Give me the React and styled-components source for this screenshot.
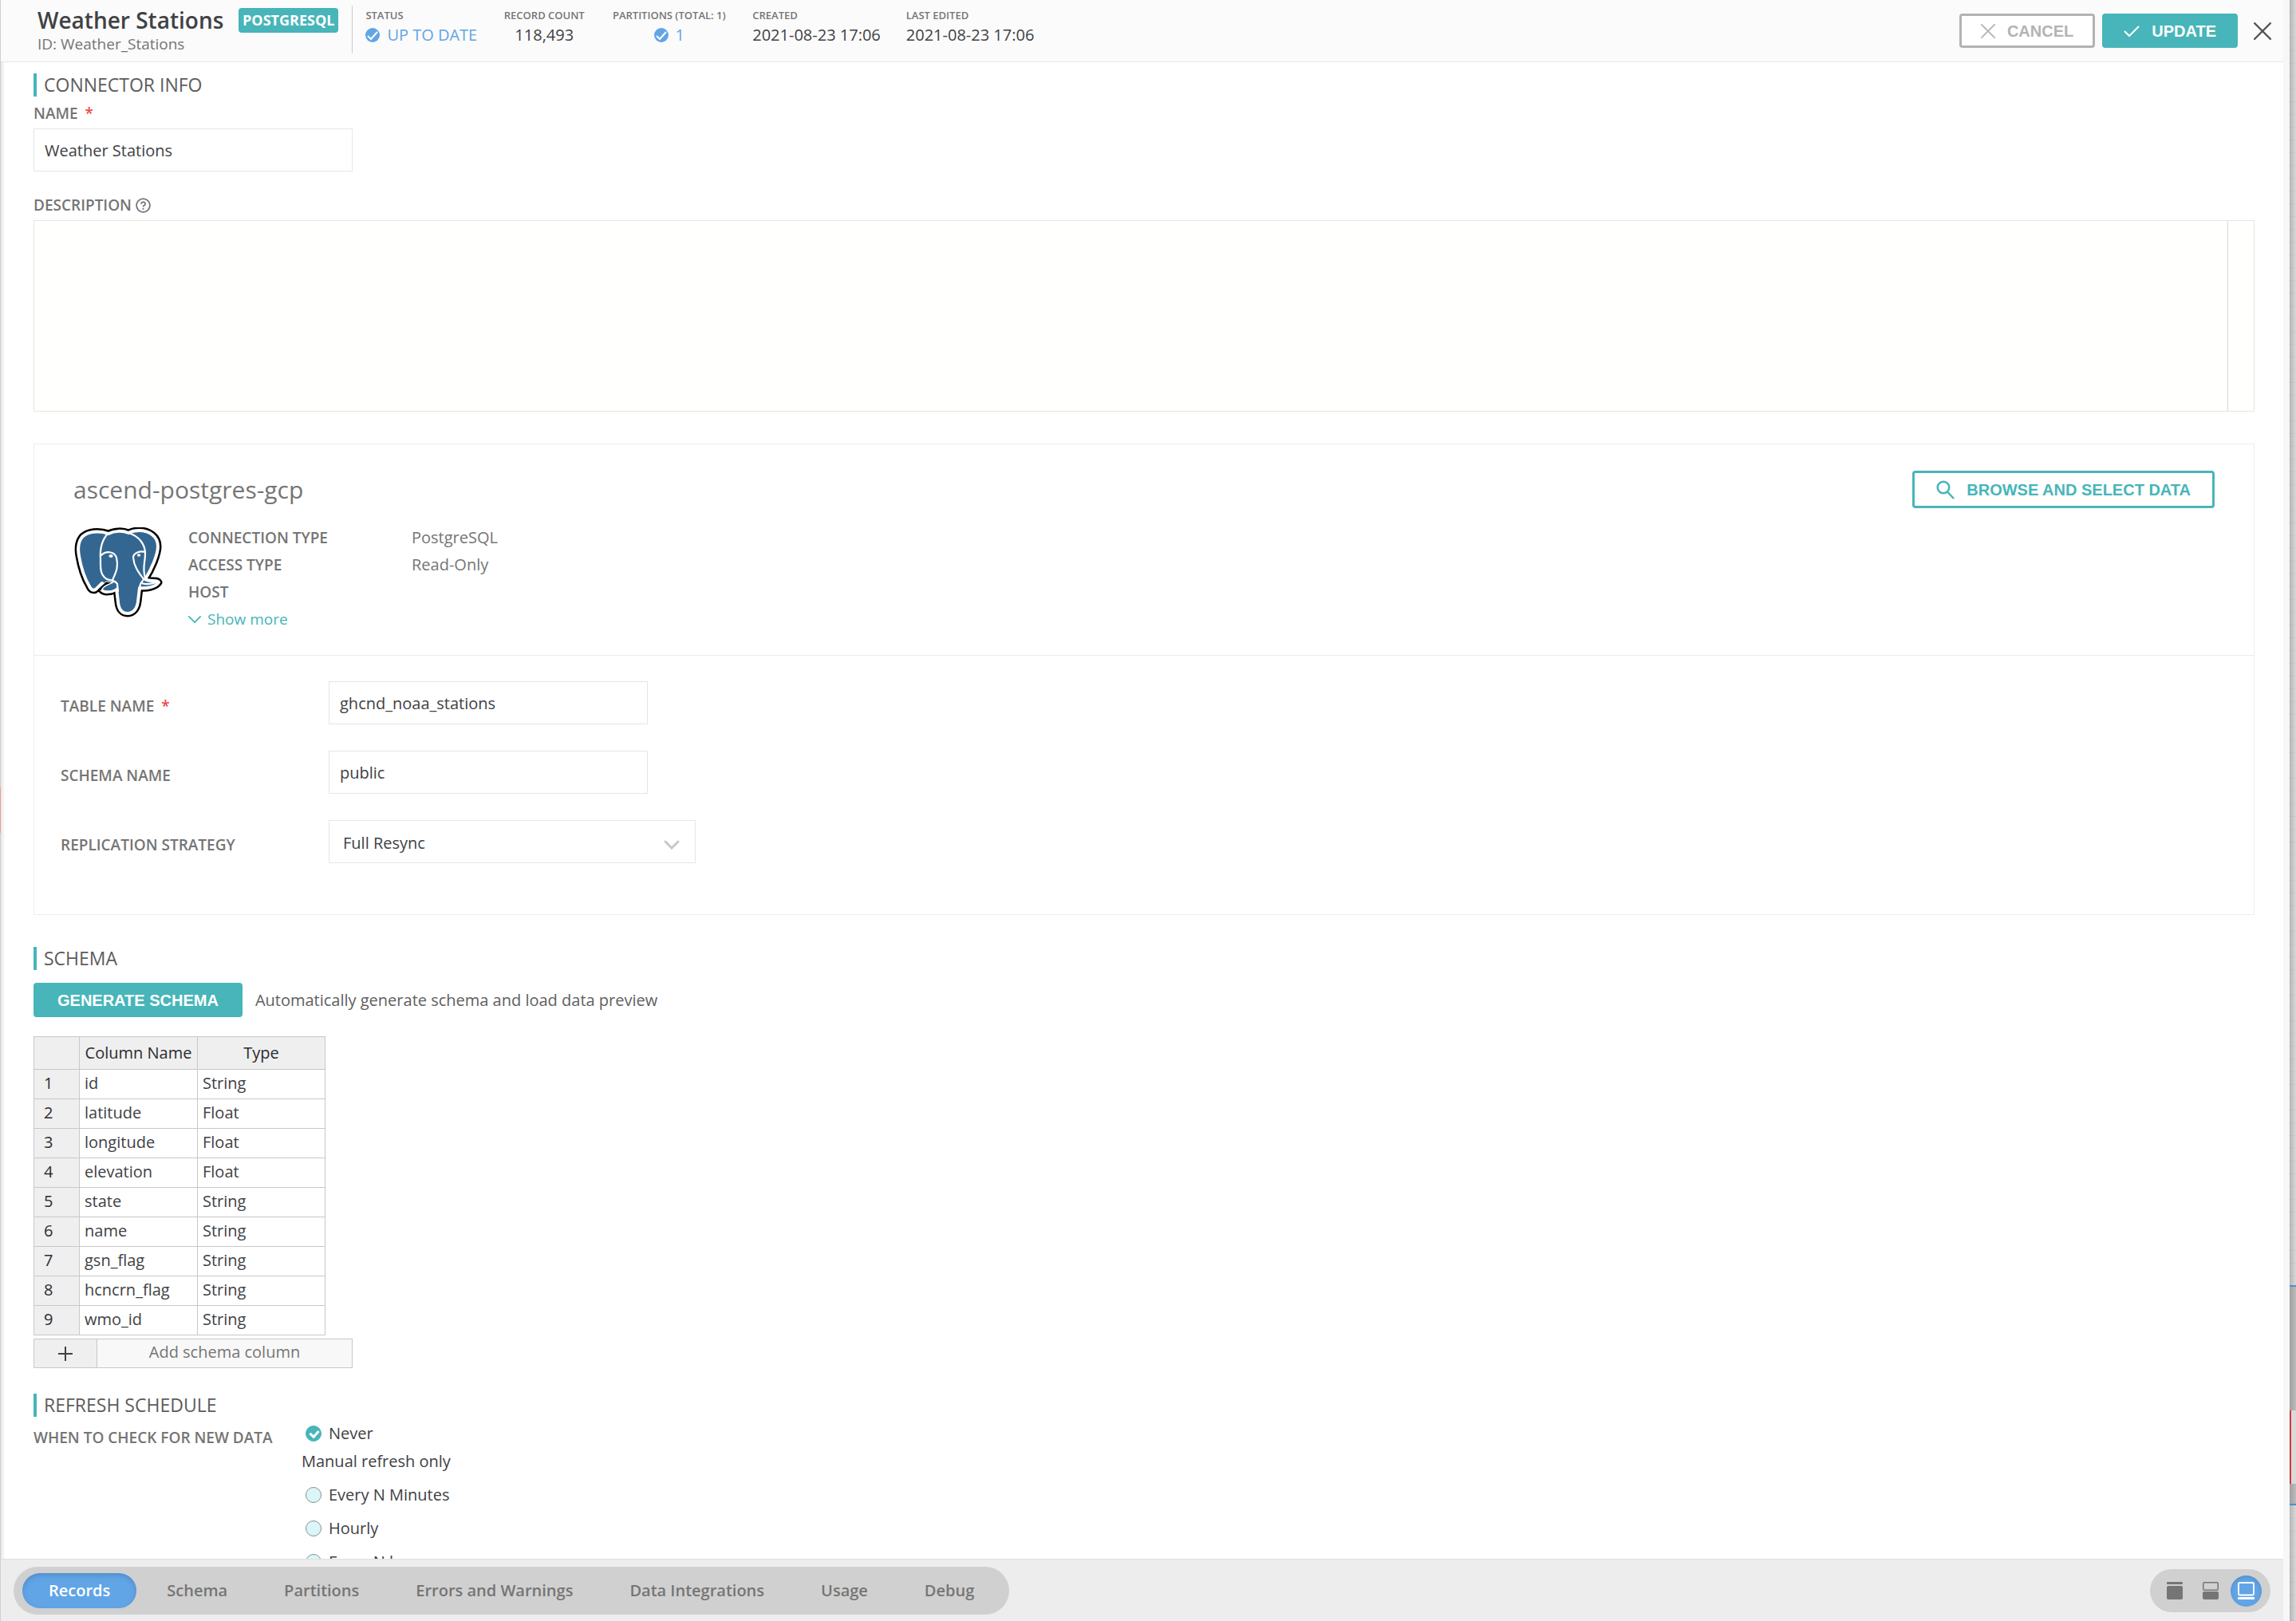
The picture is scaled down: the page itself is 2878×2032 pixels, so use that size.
import React from 'react';
import styled, { createGlobalStyle, css } from 'styled-components';

const teal = '#47b5b9';
const blue = '#62a5e6';
const grey = '#757575';
const dark = '#404144';
const line = '#e6e6e6';

const GlobalStyle = createGlobalStyle`
  * {
    box-sizing: border-box;
  }

  body {
    margin: 0;
    color: ${dark};
    background: #d6d6d6;
    font: 20px/28px 'Open Sans', 'Noto Sans', sans-serif;
  }

  button, input, select, textarea {
    margin: 0;
    color: inherit;
    font: inherit;
  }
`;

const Screen = styled.div`
  display: flex;
  height: 100vh;
  overflow: hidden;
`;

/* one pixel of canvas to the left of the panel, with the end of a red node */
const Edge = styled.div`
  flex: 0 0 1px;
  background: linear-gradient(#cfcfcf 987px, #f09a9a 987px 1044px, #cfcfcf 1044px);
`;

const Panel = styled.main`
  display: flex;
  flex: 1;
  flex-direction: column;
  min-width: 0;
  background: #fff;
  box-shadow: inset 4px 0 4px -2px #e0e0e0;
`;

const Gutter = styled.div`
  flex: 0 0 8px;
  background: #f7f7f7;
`;

/* the slice of the dataflow canvas that shows beside the panel */
const Canvas = styled.div`
  display: flex;
  flex: 0 0 8px;
  flex-direction: column;
  background:
    linear-gradient(90deg, rgba(0, 0, 0, 0.16), transparent),
    repeating-linear-gradient(#d9d9d9 0 15px, #d2d2d2 15px 16px);
`;

const Group = styled.div`
  height: 276px;
  margin-top: 1611px;
  padding-top: 155px;
  border-top: 2px solid #4a90d0;
  border-bottom: 2px solid #4a90d0;
  background: linear-gradient(90deg, #a0a0a0, #bcbcbc);
`;

const GroupNode = styled.div`
  height: 92px;
  border-left: 2px solid #cf3a3a;
  background: #dadada;
`;

const Header = styled.header`
  display: flex;
  flex: 0 0 78px;
  align-items: flex-start;
  padding: 0 15px 0 46px;
  border-bottom: 1px solid ${line};
  background: #fbfbfb;
`;

const Titles = styled.div`
  min-width: 252px;
  padding: 7px 16px 0 0;
  color: ${grey};
  font-size: 19px;
  line-height: 24px;
`;

const Title = styled.h1`
  margin: 0;
  color: ${dark};
  font-size: 28px;
  font-weight: 600;
  line-height: 36px;
`;

const Badge = styled.span`
  margin-top: 10px;
  padding: 0 5px;
  border-radius: 4px;
  color: #fff;
  background: ${teal};
  font-size: 18px;
  font-weight: 700;
  line-height: 31px;
`;

const Stats = styled.dl`
  display: flex;
  gap: 32px;
  height: 60px;
  margin: 7px 0 0 17px;
  padding-left: 16px;
  border-left: 1px solid #ccc;
`;

const Stat = styled.div`
  min-width: ${p => p.$width}px;
  text-align: ${p => (p.$center ? 'center' : 'left')};
`;

const StatLabel = styled.dt`
  padding-top: 2px;
  color: ${grey};
  font-size: 13px;
  font-weight: 600;
  line-height: 20px;
`;

const StatValue = styled.dd`
  display: flex;
  gap: 9px;
  align-items: center;
  justify-content: ${p => (p.$center ? 'center' : 'flex-start')};
  margin: 0;
  color: ${p => (p.$blue ? blue : dark)};
  line-height: 30px;
`;

const Actions = styled.div`
  display: flex;
  gap: 9px;
  align-items: center;
  margin: 17px 0 0 auto;
`;

const Button = styled.button`
  display: flex;
  gap: 15px;
  align-items: center;
  height: ${p => (p.$tall ? 47 : 43)}px;
  padding: 0 ${p => (p.$wide ? 27 : 24)}px;
  border: 3px solid ${teal};
  border-radius: 4px;
  color: #fff;
  background: ${teal};
  font: 700 20px/24px 'Liberation Sans', Arial, sans-serif;
  white-space: nowrap;

  ${p => p.$outline && css`
    border-color: ${p.$outline};
    color: ${p.$outline};
    background: #fff;
  `}
`;

const CloseButton = styled.button`
  display: flex;
  margin-left: 11px;
  padding: 0;
  border: 0;
  color: #555;
  background: none;
`;

const Content = styled.div`
  flex: 1;
  min-height: 0;
  overflow: hidden;
  padding: 14px 36px 0 41px;
`;

const Heading = styled.h2`
  margin: ${p => p.$top || 0}px 0 ${p => p.$bottom || 0}px;
  padding-left: 9px;
  border-left: 4px solid ${teal};
  color: #5c5c5c;
  font-size: 23px;
  font-weight: 500;
  line-height: 29px;
`;

const Label = styled.label`
  display: flex;
  gap: 5px;
  align-items: center;
  color: ${grey};
  font-size: 19px;
  font-weight: 600;
  line-height: 24px;
`;

const Required = styled.span`
  margin-left: 4px;
  color: #f04848;
`;

const Field = styled.div`
  display: flex;
  flex-direction: column;
  gap: 7px;
  margin-bottom: ${p => p.$bottom}px;
`;

const TextInput = styled.input`
  width: 400px;
  height: 54px;
  padding: 0 13px;
  border: 1px solid ${line};
  background: #fff;
`;

const Editor = styled.div`
  display: flex;
  height: 240px;
  border: 1px solid ${line};
`;

const TextArea = styled.textarea`
  flex: 1;
  padding: 8px;
  border: 0;
  border-right: 1px solid #d8d8d8;
  background: #fffffd;
  resize: none;
`;

const EditorRail = styled.div`
  flex: 0 0 32px;
  background: #fffffd;
`;

const Card = styled.section`
  border: 1px solid #ededed;
`;

const Connection = styled.div`
  padding: 33px 49px 28px;
  border-bottom: 1px solid #ededed;
`;

const ConnectionTop = styled.div`
  display: flex;
  align-items: center;
  justify-content: space-between;
  margin-bottom: 20px;
`;

const ConnectionName = styled.h3`
  margin: 0;
  color: ${grey};
  font-size: 30px;
  font-weight: 400;
  line-height: 36px;
`;

const ConnectionInfo = styled.div`
  display: flex;
  gap: 32px;
  color: ${grey};
  line-height: 34px;
`;

const Facts = styled.dl`
  display: grid;
  grid-template-columns: 280px auto;
  grid-auto-rows: 34px;
  margin: 0;

  dt {
    font-size: 19px;
    font-weight: 600;
  }

  dd {
    margin: 0;
  }
`;

const ShowMore = styled.button`
  display: flex;
  gap: 8px;
  align-items: center;
  padding: 0;
  border: 0;
  color: ${teal};
  background: none;
  font-size: 19px;
  line-height: 34px;
`;

const Form = styled.div`
  display: flex;
  flex-direction: column;
  gap: 33px;
  padding: 32px 33px 64px;
`;

const FormRow = styled.div`
  display: grid;
  grid-template-columns: 336px auto;
  align-items: center;
  justify-content: start;

  ${Label} {
    padding-top: 8px;
  }
`;

const SelectBox = styled.div`
  position: relative;

  svg {
    position: absolute;
    top: 25px;
    right: 20px;
    pointer-events: none;
  }
`;

const Select = styled.select`
  display: block;
  width: 460px;
  height: 54px;
  padding: 4px 17px 0;
  border: 1px solid ${line};
  border-radius: 0;
  background: #fff;
  appearance: none;
`;

const Generate = styled.div`
  display: flex;
  gap: 16px;
  align-items: center;
  margin-bottom: 24px;
  color: #606060;
`;

const Table = styled.table`
  width: 365px;
  border-collapse: collapse;
  table-layout: fixed;
  line-height: 24px;

  th, td {
    height: 37px;
    padding: 0 6px 2px;
    border: 1px solid #c8c8c8;
    text-align: left;
    white-space: nowrap;
  }

  th {
    color: #2c2c2e;
    background: #efefef;
    font-weight: 400;
  }

  thead th {
    height: 41px;
    padding-bottom: 0;
    text-align: center;
  }

  tbody th {
    padding-left: 12px;
  }
`;

const AddColumn = styled.button`
  display: flex;
  width: 400px;
  height: 37px;
  margin-top: 4px;
  padding: 0;
  border: 1px solid #c8c8c8;
  color: ${grey};
  background: #f8f8f8;
  line-height: 32px;
`;

const AddIcon = styled.span`
  display: flex;
  flex: 0 0 79px;
  align-items: center;
  justify-content: center;
  height: 35px;
  border-right: 1px solid #c8c8c8;
  color: ${dark};
  background: #efefef;
`;

const AddText = styled.span`
  flex: 1;
`;

const Schedule = styled.div`
  display: grid;
  grid-template-columns: 336px auto;
  align-items: start;
`;

const ScheduleLabel = styled.div`
  padding-top: 14px;
  color: ${grey};
  font-size: 19px;
  font-weight: 600;
  line-height: 24px;
`;

const Option = styled.label`
  display: flex;
  gap: 9px;
  align-items: center;
  height: 42px;
  padding-left: 5px;
`;

const OptionNote = styled.div`
  margin-bottom: 7px;
`;

const Radio = styled.input`
  position: relative;
  width: 20px;
  height: 20px;
  border: 1px solid #7f9494;
  border-radius: 50%;
  background: #dcf6f7;
  appearance: none;

  &:checked {
    border-color: ${teal};
    background: ${teal};
  }

  &:checked::after {
    position: absolute;
    top: 3px;
    left: 6px;
    width: 5px;
    height: 8px;
    border: solid #fff;
    border-width: 0 3px 3px 0;
    content: '';
    transform: rotate(42deg);
  }
`;

const Footer = styled.footer`
  display: flex;
  flex: 0 0 78px;
  align-items: center;
  justify-content: space-between;
  padding: 1px 16px 0;
  border-top: 1px solid #e0e0e0;
  background: #ededed;
`;

const Tabs = styled.nav`
  display: flex;
  gap: 5px;
  align-items: center;
  height: 60px;
  padding: 0 11px;
  border-radius: 30px;
  background: #d0d0d0;
`;

const Tab = styled.button`
  height: 44px;
  padding: 0 33px;
  border: 0;
  border-radius: 22px;
  color: ${p => (p.$active ? '#fff' : grey)};
  background: ${p => (p.$active ? blue : 'none')};
  box-shadow: ${p => (p.$active ? 'inset 0 3px 6px rgba(40, 90, 150, 0.3)' : 'none')};
  font-weight: 600;
`;

const Views = styled.div`
  display: flex;
  gap: 6px;
  align-items: center;
  height: 54px;
  padding: 0 11px;
  border-radius: 27px;
  background: #d0d0d0;
`;

const View = styled.button`
  display: flex;
  align-items: center;
  justify-content: center;
  width: 39px;
  height: 39px;
  padding: 0;
  border: 0;
  border-radius: 50%;
  color: ${p => (p.$active ? '#fff' : grey)};
  background: ${p => (p.$active ? blue : 'none')};
  box-shadow: ${p => (p.$active ? 'inset 0 2px 5px rgba(40, 90, 150, 0.3)' : 'none')};
`;

const columns = [
  ['id', 'String'],
  ['latitude', 'Float'],
  ['longitude', 'Float'],
  ['elevation', 'Float'],
  ['state', 'String'],
  ['name', 'String'],
  ['gsn_flag', 'String'],
  ['hcncrn_flag', 'String'],
  ['wmo_id', 'String'],
];

const tabs = ['Records', 'Schema', 'Partitions', 'Errors and Warnings', 'Data Integrations', 'Usage', 'Debug'];

function Cross({ size, width }) {
  return (
    <svg width={size} height={size} viewBox="0 0 20 20" stroke="currentColor" strokeWidth={width} strokeLinecap="round" aria-hidden="true">
      <path d="M1 1l18 18M19 1L1 19" />
    </svg>
  );
}

function Tick() {
  return (
    <svg width="20" height="18" viewBox="0 0 20 18" fill="none" stroke="currentColor" strokeWidth="2" aria-hidden="true">
      <path d="M1 9l6 6L19 3" />
    </svg>
  );
}

function Chevron({ width, height, stroke }) {
  return (
    <svg width={width} height={height} viewBox="0 0 18 10" fill="none" stroke="currentColor" strokeWidth={stroke} strokeLinecap="round" aria-hidden="true">
      <path d="M1 1l8 8 8-8" />
    </svg>
  );
}

function StatusIcon() {
  return (
    <svg width="18" height="18" viewBox="0 0 18 18" fill="none" aria-hidden="true">
      <circle cx="9" cy="9" r="9" fill={blue} />
      <path d="M3 10l4 4L15 5" stroke="#fff" strokeWidth="2" />
    </svg>
  );
}

function HelpIcon() {
  return (
    <svg width="19" height="19" viewBox="0 0 19 19" fill="none" stroke={grey} strokeWidth="1.800" aria-hidden="true">
      <circle cx="9.500" cy="9.500" r="8.400" />
      <path d="M7 7.600a2.500 2.300 0 1 1 3.600 2q-1.100.6-1.100 1.700M9.500 12.800v1.900" />
    </svg>
  );
}

function SearchIcon() {
  return (
    <svg width="23" height="24" viewBox="0 0 23 24" fill="none" stroke="currentColor" strokeWidth="2.500" aria-hidden="true">
      <circle cx="9" cy="9" r="7.300" />
      <path d="M14 14.500L22 23" />
    </svg>
  );
}

const Logo = styled.svg`
  flex: none;
  width: 112px;
  height: 114px;
  margin-top: 4px;
`;

function Elephant() {
  const outline = 'M42 8C34 5 22 4 13 9C4 14 3 26 5 36C7 48 12 64 18 74C20 79 24 80 27 77L34 70C37 73 33 75 33 78C36 82 46 82 52 77L54 94C55 104 60 108 66 108C73 108 78 102 79 93L81 76C90 77 101 75 105 69C103 65 94 69 88 65C96 53 104 34 104 24C104 12 94 4 80 4C74 4 71 5 67 7C60 4 50 4 42 8Z';
  return (
    <Logo viewBox="-2 0 112 114" fill="none" strokeLinecap="round" strokeLinejoin="round" role="img" aria-label="PostgreSQL">
      <path d={outline} stroke="#000" strokeWidth="9" />
      <path d={outline} fill="#336791" stroke="#fff" strokeWidth="4" />
      <path d="M28 78L39 68L48 69C43 72 35 73 33 79" fill="#000" stroke="#fff" strokeWidth="1" />
      <path d="M34 78C36 72 44 72 49 68L53 71L53 76C47 81 38 81 34 78Z" fill="#336791" stroke="#fff" strokeWidth="1.500" />
      <g stroke="#fff" strokeWidth="2.200">
        <path d="M41 8C33 17 31 27 32 40C32 50 31 60 40 65C45 67 51 66 53 71L54 80" />
        <path d="M67 7C80 11 88 21 88 33C88 45 84 50 88 64C83 68 81 71 81 78" />
        <path d="M33 35C38 30 49 29 52 38C55 50 51 57 47 66" />
        <path d="M88 31C82 29 73 32 73 38C74 50 81 58 86 65" />
        <path d="M84 70C90 73 97 70 103 69" />
      </g>
      <ellipse cx="45" cy="36" rx="2.600" ry="2" fill="#fff" />
      <ellipse cx="80" cy="35" rx="2.200" ry="1.700" fill="#fff" />
    </Logo>
  );
}

function PanelHeader() {
  return (
    <Header>
      <Titles>
        <Title>Weather Stations</Title>
        ID: Weather_Stations
      </Titles>
      <Badge>POSTGRESQL</Badge>
      <Stats>
        <Stat $width={135}>
          <StatLabel>STATUS</StatLabel>
          <StatValue $blue><StatusIcon />UP TO DATE</StatValue>
        </Stat>
        <Stat $width={104} $center>
          <StatLabel>RECORD COUNT</StatLabel>
          <StatValue $center>118,493</StatValue>
        </Stat>
        <Stat $width={145} $center>
          <StatLabel>PARTITIONS (TOTAL: 1)</StatLabel>
          <StatValue $blue $center><StatusIcon />1</StatValue>
        </Stat>
        <Stat $width={158}>
          <StatLabel>CREATED</StatLabel>
          <StatValue>2021-08-23 17:06</StatValue>
        </Stat>
        <Stat $width={158}>
          <StatLabel>LAST EDITED</StatLabel>
          <StatValue>2021-08-23 17:06</StatValue>
        </Stat>
      </Stats>
      <Actions>
        <Button type="button" $outline="#b3b3b3"><Cross size={18} width={2} />CANCEL</Button>
        <Button type="button"><Tick />UPDATE</Button>
        <CloseButton type="button" aria-label="Close"><Cross size={22} width={2} /></CloseButton>
      </Actions>
    </Header>
  );
}

function ConnectionCard() {
  return (
    <Card>
      <Connection>
        <ConnectionTop>
          <ConnectionName>ascend-postgres-gcp</ConnectionName>
          <Button type="button" $tall $wide $outline={teal}><SearchIcon />BROWSE AND SELECT DATA</Button>
        </ConnectionTop>
        <ConnectionInfo>
          <Elephant />
          <div>
            <Facts>
              <dt>CONNECTION TYPE</dt>
              <dd>PostgreSQL</dd>
              <dt>ACCESS TYPE</dt>
              <dd>Read-Only</dd>
              <dt>HOST</dt>
              <dd />
            </Facts>
            <ShowMore type="button"><Chevron width={16} height={9} stroke={2} />Show more</ShowMore>
          </div>
        </ConnectionInfo>
      </Connection>
      <Form>
        <FormRow>
          <Label htmlFor="table">TABLE NAME <Required>*</Required></Label>
          <TextInput id="table" defaultValue="ghcnd_noaa_stations" />
        </FormRow>
        <FormRow>
          <Label htmlFor="schema">SCHEMA NAME</Label>
          <TextInput id="schema" defaultValue="public" />
        </FormRow>
        <FormRow>
          <Label htmlFor="strategy">REPLICATION STRATEGY</Label>
          <SelectBox>
            <Select id="strategy" defaultValue="full">
              <option value="full">Full Resync</option>
            </Select>
            <svg width="20" height="12" viewBox="0 0 20 12" fill="none" stroke="#c8c8c8" strokeWidth="3" strokeLinecap="round">
              <path d="M2 2l8 8 8-8" />
            </svg>
          </SelectBox>
        </FormRow>
      </Form>
    </Card>
  );
}

function SchemaTable() {
  return (
    <Table>
      <colgroup>
        <col width="57" />
        <col width="148" />
        <col width="160" />
      </colgroup>
      <thead>
        <tr>
          <th aria-label="Row" />
          <th>Column Name</th>
          <th>Type</th>
        </tr>
      </thead>
      <tbody>
        {columns.map(([name, type], i) => (
          <tr key={name}>
            <th>{i + 1}</th>
            <td>{name}</td>
            <td>{type}</td>
          </tr>
        ))}
      </tbody>
    </Table>
  );
}

function RefreshSchedule() {
  return (
    <Schedule role="radiogroup" aria-labelledby="when">
      <ScheduleLabel id="when">WHEN TO CHECK FOR NEW DATA</ScheduleLabel>
      <div>
        <Option><Radio type="radio" name="refresh" defaultChecked />Never</Option>
        <OptionNote>Manual refresh only</OptionNote>
        <Option><Radio type="radio" name="refresh" />Every N Minutes</Option>
        <Option><Radio type="radio" name="refresh" />Hourly</Option>
        <Option><Radio type="radio" name="refresh" />Every N hours</Option>
      </div>
    </Schedule>
  );
}

function PanelFooter() {
  return (
    <Footer>
      <Tabs>
        {tabs.map((tab, i) => (
          <Tab type="button" key={tab} $active={i === 0}>{tab}</Tab>
        ))}
      </Tabs>
      <Views>
        <View type="button" aria-label="Full details">
          <svg width="20" height="22" viewBox="0 0 20 22" fill="currentColor">
            <rect width="20" height="3" rx="1" />
            <rect y="5" width="20" height="17" rx="2" />
          </svg>
        </View>
        <View type="button" aria-label="Split view">
          <svg width="20" height="22" viewBox="0 0 20 22" fill="currentColor">
            <rect x="0.750" y="0.750" width="18.500" height="9.500" rx="1.500" fill="none" stroke="currentColor" strokeWidth="1.500" />
            <rect y="12" width="20" height="10" rx="2" />
          </svg>
        </View>
        <View type="button" aria-label="Full form" $active>
          <svg width="21" height="22" viewBox="0 0 21 22" fill="currentColor">
            <rect x="1" y="1" width="19" height="15.500" rx="1.500" fill="none" stroke="currentColor" strokeWidth="1.800" />
            <rect y="19" width="21" height="3" rx="1" />
          </svg>
        </View>
      </Views>
    </Footer>
  );
}

function App() {
  return (
    <Screen>
      <GlobalStyle />
      <Edge />
      <Panel>
        <PanelHeader />
        <Content>
          <Heading $bottom={9}>CONNECTOR INFO</Heading>
          <Field $bottom={30}>
            <Label htmlFor="name">NAME <Required>*</Required></Label>
            <TextInput id="name" defaultValue="Weather Stations" />
          </Field>
          <Field $bottom={40}>
            <Label htmlFor="description">DESCRIPTION <HelpIcon /></Label>
            <Editor>
              <TextArea id="description" />
              <EditorRail />
            </Editor>
          </Field>
          <ConnectionCard />
          <Heading $top={40} $bottom={16}>SCHEMA</Heading>
          <Generate>
            <Button type="button" $wide>GENERATE SCHEMA</Button>
            Automatically generate schema and load data preview
          </Generate>
          <SchemaTable />
          <AddColumn type="button">
            <AddIcon>
              <svg width="18" height="18" viewBox="0 0 18 18" stroke="currentColor" strokeWidth="2">
                <path d="M0 9h18M9 0v18" />
              </svg>
            </AddIcon>
            <AddText>Add schema column</AddText>
          </AddColumn>
          <Heading $top={32}>REFRESH SCHEDULE</Heading>
          <RefreshSchedule />
        </Content>
        <PanelFooter />
      </Panel>
      <Gutter />
      <Canvas>
        <Group>
          <GroupNode />
        </Group>
      </Canvas>
    </Screen>
  );
}

export default App;
